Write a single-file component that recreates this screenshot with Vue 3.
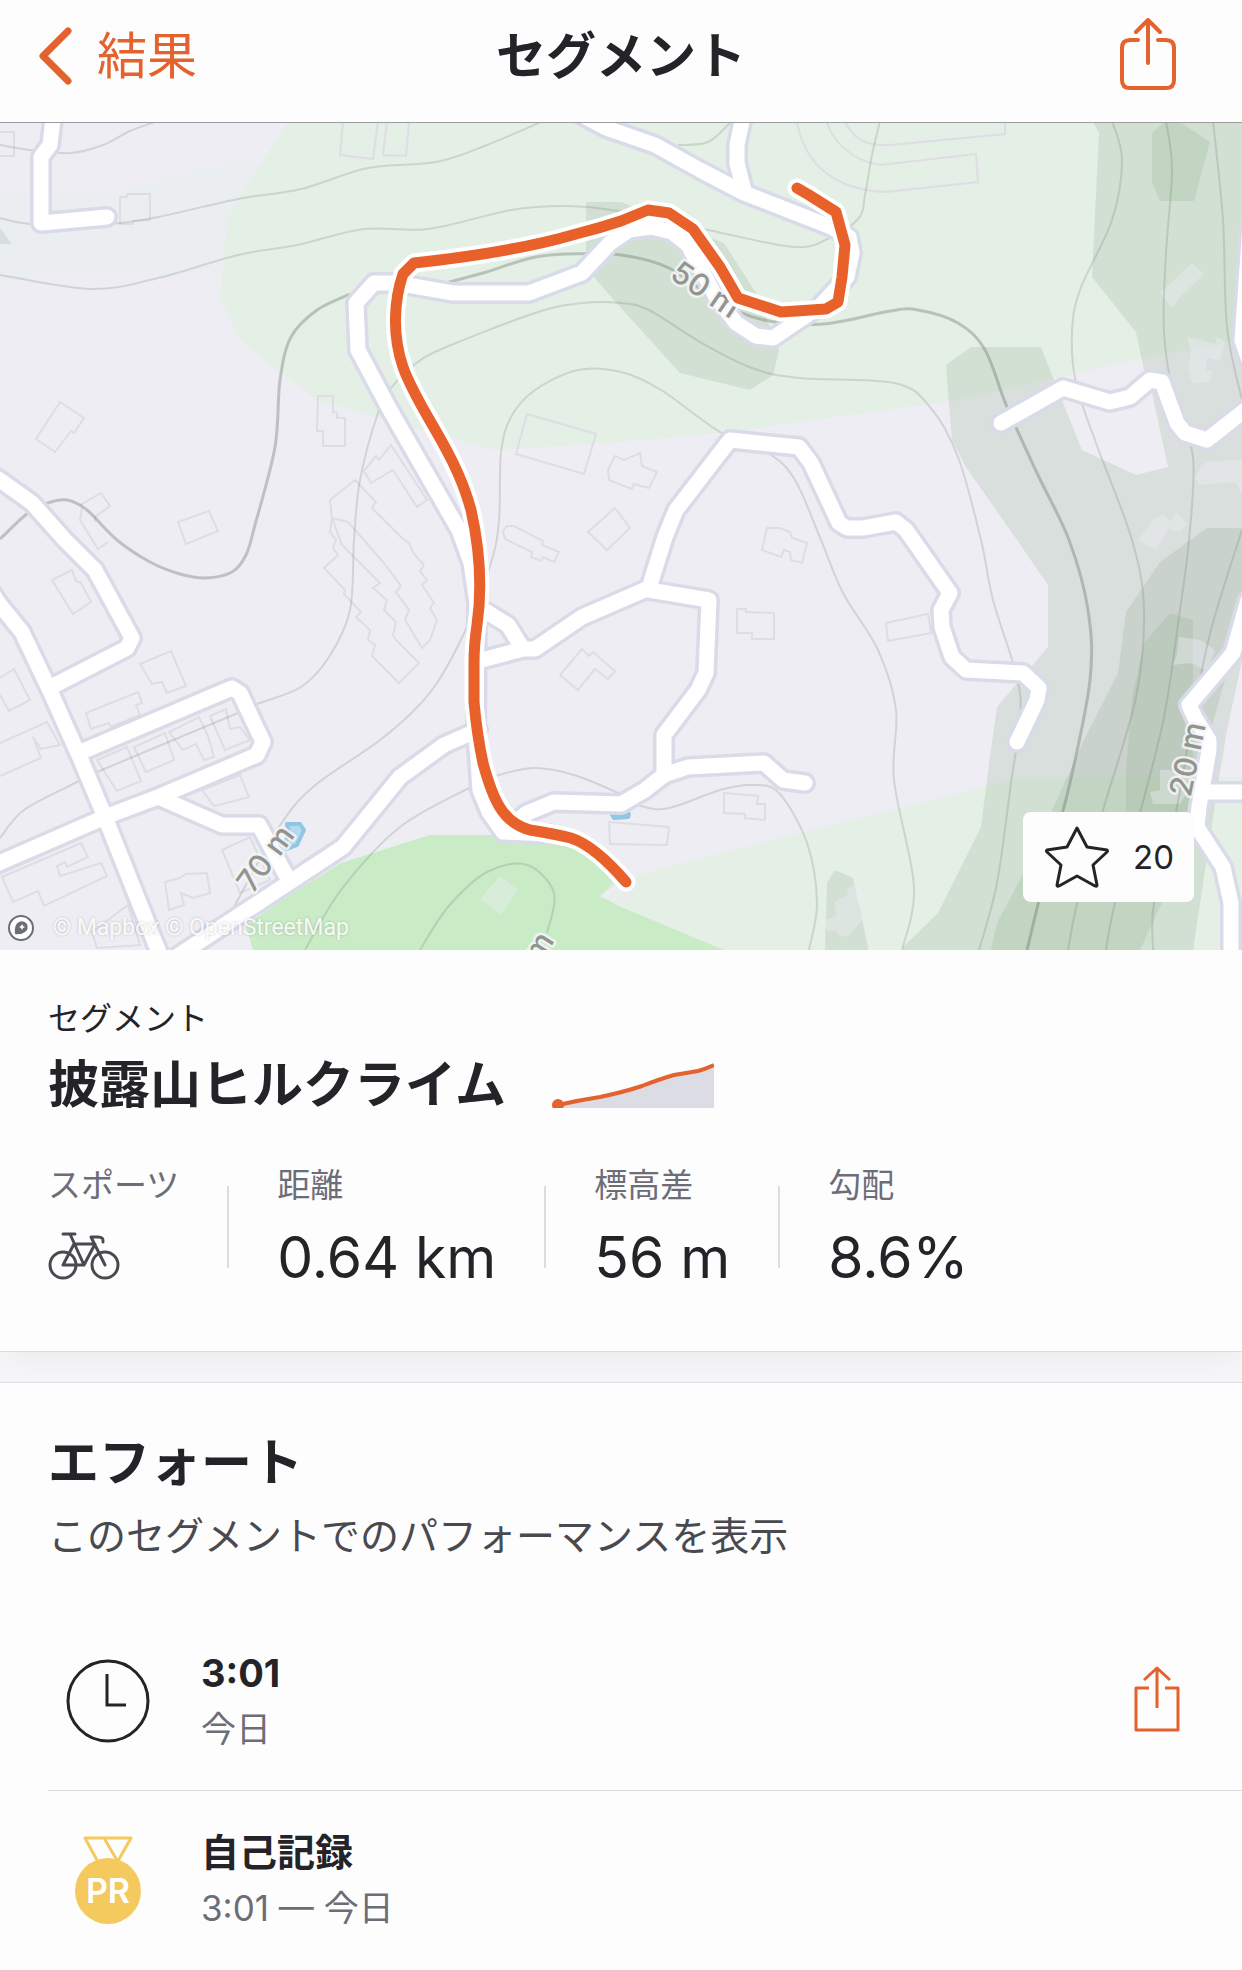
<script setup>
import { ref } from 'vue';

const starred = ref(false);
const starCount = ref(20);

const stats = [
    { label: 'スポーツ', icon: 'bike' },
    { label: '距離', value: '0.64 km' },
    { label: '標高差', value: '56 m' },
    { label: '勾配', value: '8.6%' },
];

const efforts = [
    { icon: 'clock', title: '3:01', detail: '今日', shareable: true },
    { icon: 'medal', title: '自己記録', detail: '3:01 — 今日', shareable: false },
];

const shades = [
    '586,202 621,202 692,230 724,243 756,293 779,350 773,375 750,390 680,373 621,308 586,268',
    '1093,122 1099,133 1092,277 1136,332 1144,370 1152,393 1168,467 1136,475 1082,450 1063,403 1041,347 971,347 946,365 952,440 966,467 1017,540 1048,585 1048,647 997,707 990,757 981,827 938,913 903,947 903,950 1193,950 1211,830 1215,803 1227,730 1242,660 1242,122',
    '1164,122 1152,133 1152,183 1160,201 1194,201 1210,142 1180,122',
    '1207,528 1160,562 1126,612 1118,673 1084,740 1049,817 1020,880 997,923 991,950 1140,950 1160,907 1187,863 1205,750 1242,620 1242,528',
    '1170,613 1193,620 1193,820 1126,813 1126,770 1132,697 1144,643',
    '835,870 853,878 868,947 868,950 825,950 827,883',
];

const contours = [
    [[0, 145], [30, 150], [71, 153], [103, 145], [130, 131], [158, 121]],
    [[0, 218], [30, 224], [107, 224], [158, 217], [238, 199], [301, 189], [368, 168], [436, 162], [487, 145], [543, 121]],
    [[0, 275], [91, 289], [158, 278], [238, 255], [297, 245], [364, 229], [428, 229], [511, 210], [566, 206], [618, 211], [708, 230], [795, 247], [831, 237], [859, 218], [865, 195], [872, 155], [880, 121]],
    [[0, 838], [24, 810], [75, 783], [97, 772], [238, 713], [257, 704], [301, 687], [329, 657], [350, 610], [354, 540], [360, 480], [378, 413], [392, 387], [414, 365], [444, 348], [535, 313], [582, 303], [621, 303], [649, 310], [700, 342], [752, 368], [799, 378], [894, 383], [930, 407], [958, 457], [981, 540], [993, 600], [1017, 677], [1020, 720], [1011, 783], [997, 883], [979, 950]],
    [[234, 907], [277, 830], [313, 787], [384, 737], [432, 690], [467, 627], [491, 563], [499, 520], [501, 453], [511, 417], [535, 390], [578, 370], [621, 372], [661, 390], [720, 432], [768, 453], [795, 480], [821, 540], [843, 593], [878, 650], [896, 710], [894, 780], [914, 887], [902, 950]],
    [[305, 950], [341, 890], [400, 827], [471, 787], [499, 775], [535, 768], [574, 775], [618, 793], [641, 806], [669, 808], [720, 790], [752, 785], [779, 793], [807, 843], [817, 903], [809, 950]],
    [[420, 950], [448, 907], [487, 872], [527, 865], [554, 893], [547, 933]],
    [[1112, 121], [1122, 160], [1112, 220], [1080, 290], [1072, 333], [1076, 383], [1096, 443], [1132, 540], [1144, 610], [1136, 697], [1104, 807], [1078, 900], [1068, 950]],
    [[1166, 121], [1172, 170], [1166, 253], [1164, 333], [1175, 403], [1193, 457], [1189, 540], [1179, 617], [1164, 717], [1140, 813], [1114, 907], [1106, 950]],
    [[1213, 121], [1223, 220], [1227, 327], [1242, 400]],
    [[1242, 530], [1211, 630], [1193, 717], [1175, 817], [1154, 903], [1153, 950]],
    [[678, 145], [708, 142], [732, 121]],
];

const mainContours = [
    [[0, 539], [28, 513], [48, 503], [67, 500], [87, 510], [117, 540], [150, 562], [180, 574], [206, 578], [232, 572], [246, 555], [255, 525], [275, 447], [280, 380], [291, 337], [317, 310], [350, 294]],
    [[449, 282], [483, 273], [531, 258], [566, 254], [621, 255], [669, 268], [720, 302], [764, 320], [823, 324], [890, 311], [918, 310], [958, 323], [985, 350], [1007, 407], [1037, 473], [1069, 540], [1088, 610], [1090, 680], [1069, 787], [1049, 860], [1027, 950]],
];

const buildings = [
    'M0 132H14V156H0',
    'M120 197H127V194H150V220L133 221V224H120Z',
    'M343 122L340 155L373 159L378 122',
    'M387 122L383 155L406 156L409 122',
    'M60 402L84 418L74 433L71 431L55 452L36 439Z',
    'M318 396H333V412L337 413V418H345V446H323V431H317Z',
    'M527 414L596 434L584 474L516 454Z',
    'M178 522L209 511L218 531L186 544Z',
    'M80 505L101 493L110 506L95 517V522M82 508L80 520L98 549L108 542',
    'M379 460L391 445L427 500L417 507L393 470L371 483L364 471L376 456Z',
    'M355 480L376 502L372 508L402 538L409 543L414 554L424 565L420 571L427 580L422 585L434 603L430 608L437 620L430 640L422 648L410 628L405 620L409 610L396 592L401 586L384 563L348 522L332 518L330 500Z',
    'M332 518L330 532L336 540L333 548L338 555L324 568L345 590L344 594L361 612L356 617L370 630L368 640L375 645L372 656L399 683L419 663L396 640L393 635L396 622L384 610L387 600L373 588L380 583L342 545Z',
    'M507 526L514 526L543 541L542 545L559 552L554 562L543 557L541 561L531 557L532 552L505 539L503 531Z',
    'M588 532L615 508L630 528L607 550Z',
    'M608 470L615 456L624 460L640 453L642 466L657 472L649 488L634 484L632 489L609 480Z',
    'M767 528L780 528L790 532L792 538L807 543L802 563L791 560L790 552L784 550L781 557L762 550Z',
    'M737 609H746V612L774 613V639H752V633H737Z',
    'M886 623L928 614L931 633L888 641Z',
    'M560 675L582 649L589 656L593 652L615 671L608 679L595 669L578 690Z',
    'M724 793L758 796L757 804H765V820L745 818V814L724 813Z',
    'M609 822L669 827L667 845L610 844Z',
    'M52 580L72 570L76 581L81 583L91 602L73 614Z',
    'M140 664L171 651L186 686L167 693L162 682L152 684Z',
    'M86 713L138 692L142 703L136 705L140 715L111 727L109 723L91 729Z',
    'M0 678L14 669L30 700L9 711L0 695M0 743L47 722L60 745L41 749L33 737L41 758L0 776',
    'M97 760L127 747L141 781L117 791Z M134 747L165 733L174 760L146 772Z',
    'M169 732L199 717L208 736L214 757L204 760L196 744L183 750Z M210 716L226 709L230 729L240 727L250 740L225 750Z',
    'M202 790L240 775L249 797L234 801L214 806Z',
    'M2 877L81 843L88 857L67 867L65 862L57 866L60 876L101 863L107 876L44 906L38 891L13 902Z',
    'M165 882L180 878L186 874L207 873L210 893L193 898L181 893L184 905L169 910Z',
    'M222 850L250 837L270 880L240 893Z',
    'M92 932L128 905L140 945L97 948Z',
    'M797 122C805 165 835 190 886 192L978 182L976 154L880 165C850 160 832 140 827 122M845 122C855 142 870 146 890 145L1005 134V122',
];

// These sit on shaded slopes, where they are drawn lighter than the ground.
const litBuildings = [
    '1160,293 1192,263 1204,274 1182,295 1178,300 1172,308',
    '1187,337 1205,341 1215,344 1217,336 1225,342 1220,361 1207,358 1206,370 1212,371 1210,382 1192,383 1188,368 1191,352',
    '1195,477 1201,467 1207,462 1242,459 1242,495 1235,482 1199,485',
    '1138,540 1155,518 1164,514 1170,522 1176,512 1187,524 1180,532 1168,529 1156,550',
    '1179,637 1200,640 1215,650 1207,671 1190,663 1173,665 1177,654',
    '1150,792 1160,790 1160,770 1180,770 1195,780 1180,804 1153,804',
    '834,902 848,895 847,889 858,884 866,902 858,907 862,920 850,935 840,937 835,930 828,932 822,921 836,916',
    '500,876 518,890 501,915 480,899',
    '600,896 615,880 635,885 624,908',
];

const roads = [
    '54,110 50,145 41,157 41,223 107,217',
    '580,114 606,128 655,145 700,170 744,193 831,227 849,237 852,253 847,277 819,307 773,338 756,336 736,323 716,297 688,245 672,232 651,227 629,230 610,243 582,273 529,293 453,293 396,283 374,283 356,303 358,350 390,410 459,530 471,563 477,603 476,733 480,790 489,812 503,832 550,834',
    '744,112 737,145 737,163 744,190',
    '-10,474 0,480 32,503 65,540 95,570 132,638 127,648 51,687',
    '-10,590 0,605 22,632 51,693 81,760 105,817 162,960',
    '81,752 232,688 240,693 263,742 257,755 158,797 105,817 -10,867',
    '158,797 222,825 259,825 287,877',
    '170,961 343,847 400,777 444,745 478,730',
    '487,612 508,625 523,649',
    '478,661 523,649 535,649 582,617 649,588 665,537 676,510 730,440 799,447 811,463 839,523 847,528 863,528 896,522 906,530 950,593 941,610 942,627 952,657 966,670 1023,673 1039,688 1037,700 1017,742',
    '649,590 709,600 706,673 698,690 664,735 664,775 645,790 621,804 554,802 527,813 510,826',
    '664,775 688,767 764,763 783,780 805,783',
    '1001,423 1063,388 1110,402 1130,397 1150,380 1162,382 1177,423 1185,433 1207,440 1254,403',
    '1250,225 1242,340 1254,375',
    '1248,600 1233,653 1189,705 1195,718 1209,740 1209,750 1199,807 1197,827 1223,867 1231,903 1231,960',
    '1203,792 1252,792',
];

const route = [
    'M797 188L809 195L836 212L845 245L842 277L838 302L826 309L781 312L738 298',
    'L720 267L693 229L669 213L648 210L621 221Q600 228 576 234Q515 252 414 263',
    'L403 274C394 300 392 335 403 367C418 410 455 450 471 510C480 550 482 590 477 625',
    'Q474 645 474 663V702Q477 735 483 763C493 800 503 823 530 830Q555 834 571 838Q595 846 626 882',
].join('');

function smooth(points) {
    let path = `M${points[0].join(' ')}`;

    for (let i = 0; i < points.length - 1; i++) {
        const before = points[i - 1] || points[i];
        const from = points[i];
        const to = points[i + 1];
        const after = points[i + 2] || to;

        const c1 = [from[0] + (to[0] - before[0]) / 6, from[1] + (to[1] - before[1]) / 6];
        const c2 = [to[0] - (after[0] - from[0]) / 6, to[1] - (after[1] - from[1]) / 6];

        path += `C${c1.join(' ')} ${c2.join(' ')} ${to.join(' ')}`;
    }

    return path;
}

function toggleStar() {
    starred.value = !starred.value;
    starCount.value += starred.value ? 1 : -1;
}
</script>

<template>
    <div class="page">
        <header class="navbar">
            <button type="button" class="back">
                <svg width="34" height="58" viewBox="0 0 34 58" aria-hidden="true">
                    <path d="M30 4L5 29L30 54" />
                </svg>
                <span>結果</span>
            </button>
            <h1 class="navbar-title">セグメント</h1>
            <button type="button" class="share" aria-label="共有">
                <svg width="56" height="72" viewBox="0 0 56 72" aria-hidden="true">
                    <path d="M18 22H10Q2 22 2 30V62Q2 70 10 70H46Q54 70 54 62V30Q54 22 46 22H38M28 2V45M16 14L28 2L40 14" />
                </svg>
            </button>
        </header>

        <div class="map">
            <svg class="map-canvas" viewBox="0 123 1242 827" role="img" aria-label="地図">
                <polygon class="haze" points="0,193 120,190 253,155 300,230 222,275 40,275 0,285" />
                <polygon class="park" points="287,122 253,177 228,217 220,297 238,338 277,370 317,400 376,417 440,435 495,450 621,442 720,433 958,400 1144,358 1242,340 1242,122" />
                <polygon class="park" points="602,898 637,875 1021,777 1242,777 1242,950 700,950" />
                <polygon class="wood" points="430,835 341,863 290,895 246,925 253,950 724,950 621,907 600,896 621,880 590,845 560,835" />
                <polygon v-for="(points, i) in shades" :key="i" class="shade" :points="points" />
                <polygon class="shade" points="0,228 12,244 0,244" />
                <path v-for="(d, i) in buildings" :key="i" class="building" :d="d" />
                <polygon v-for="(points, i) in litBuildings" :key="i" class="building-lit" :points="points" />
                <path v-for="(points, i) in contours" :key="i" class="contour" :d="smooth(points)" />
                <path v-for="(points, i) in mainContours" :key="i" class="contour main" :d="smooth(points)" />
                <path class="pool" d="M287 824L300 824L304 830L297 845L287 849L284 845L289 833ZM612 815L629 814L628 817L614 818Z" />
                <polyline v-for="(points, i) in roads" :key="i" class="road-casing" :points="points" />
                <polyline v-for="(points, i) in roads" :key="i" class="road" :points="points" />
                <g class="elevation">
                    <text transform="translate(706 289) rotate(34)">50 m</text>
                    <text transform="translate(265 858) rotate(-54)">70 m</text>
                    <text transform="translate(1187 759) rotate(-78)">20 m</text>
                    <text transform="translate(538 946) rotate(-58)">m</text>
                </g>
                <path class="route-casing" :d="route" />
                <path class="route" :d="route" />
            </svg>

            <div class="attribution">
                <svg width="28" height="28" viewBox="0 0 28 28" aria-hidden="true">
                    <circle cx="14" cy="14" r="12" fill="#fff" stroke="#6c6e76" stroke-width="2" />
                    <path d="M8 20Q7 10 12 8Q17 6 20 10Q22 15 18 18Q14 21 8 20Z" fill="#6c6e76" />
                    <path d="M15 10L16 12L18 13L16 14L15 16L14 14L12 13L14 12Z" fill="#fff" />
                </svg>
                <span><a href="#mapbox">© Mapbox</a> <a href="#osm">© OpenStreetMap</a></span>
            </div>

            <button type="button" class="star" :aria-pressed="starred" @click="toggleStar">
                <svg width="64" height="62" viewBox="0 0 64 62" aria-hidden="true">
                    <path d="M32 2L42 21L62 24Q63 25 62 26L48 39L52 59Q52 61 50 60L32 50L14 60Q12 61 12 59L16 39L2 26Q1 25 2 24L22 21Z" />
                </svg>
                <span>{{ starCount }}</span>
            </button>
        </div>

        <section class="summary">
            <p class="kind">セグメント</p>
            <div class="name-row">
                <h2>披露山ヒルクライム</h2>
                <svg class="profile" width="162" height="45" viewBox="0 0 162 45" aria-hidden="true">
                    <path d="M6 42L50 33L87 24Q108 15 122 11L148 7L162 1V45H6Z" fill="#dcdce5" />
                    <path d="M6 42Q28 37 48 34Q72 29 90 23Q108 16 122 12L146 8Q153 6 162 2" fill="none" stroke="#e4622d" stroke-width="4" />
                    <circle cx="6" cy="42" r="6" fill="#e4622d" />
                </svg>
            </div>
            <dl class="stats">
                <div v-for="stat in stats" :key="stat.label" class="stat">
                    <div>
                        <dt>{{ stat.label }}</dt>
                        <dd>
                            <svg v-if="stat.icon === 'bike'" class="bike" width="72" height="50" viewBox="0 0 72 50" role="img" aria-label="自転車">
                                <circle cx="15" cy="33" r="13" />
                                <circle cx="57" cy="33" r="13" />
                                <path d="M15 2H27M22 2L36 33H15L26 12H47L36 33M57 33L43 5H50Q56 5 55 10" />
                            </svg>
                            <template v-else>{{ stat.value }}</template>
                        </dd>
                    </div>
                </div>
            </dl>
        </section>

        <section class="efforts">
            <h2>エフォート</h2>
            <p class="lead">このセグメントでのパフォーマンスを表示</p>
            <ul>
                <li v-for="effort in efforts" :key="effort.title">
                    <svg v-if="effort.icon === 'clock'" class="effort-icon" width="84" height="88" viewBox="0 0 84 88" aria-hidden="true">
                        <circle cx="42" cy="44" r="40" fill="none" stroke="#242428" stroke-width="3" />
                        <path d="M41 17V48H60" fill="none" stroke="#242428" stroke-width="3" />
                    </svg>
                    <svg v-else class="effort-icon" width="84" height="88" viewBox="0 0 84 88" aria-hidden="true">
                        <path d="M32 26L19 2H65L52 25M38 2L52 26" fill="none" stroke="#f4ca5f" stroke-width="3" stroke-linejoin="round" />
                        <circle cx="42" cy="55" r="33" fill="#f4ca5f" />
                        <text x="42" y="67" class="medal-text">PR</text>
                    </svg>
                    <div class="effort-text">
                        <strong>{{ effort.title }}</strong>
                        <span>{{ effort.detail }}</span>
                    </div>
                    <button v-if="effort.shareable" type="button" class="share small" aria-label="エフォートを共有">
                        <svg width="46" height="66" viewBox="0 0 46 66" aria-hidden="true">
                            <path d="M15 22H2V64H44V22H31M23 2V42M10 14L23 2L36 14" />
                        </svg>
                    </button>
                </li>
            </ul>
        </section>
    </div>
</template>

<style>
body {
    margin: 0;
    background: #fdfdfd;
}
</style>

<style scoped>
.page {
    font-family: Inter, 'Noto Sans CJK JP', sans-serif;
    color: #242428;
    background: #f5f5f8;
}

h1,
h2,
p,
dl,
dd,
ul {
    margin: 0;
    padding: 0;
}

button {
    padding: 0;
    border: 0;
    background: none;
    font-family: inherit;
    color: inherit;
    cursor: pointer;
}

button svg,
.effort-icon {
    display: block;
    flex: none;
}

.navbar {
    display: grid;
    grid-template-columns: 1fr auto 1fr;
    align-items: center;
    height: 112px;
    padding: 0 38px 10px;
    border-bottom: 1px solid #9a9ca0;
    background: #fdfdfd;
}

.back {
    display: flex;
    align-items: center;
    gap: 25px;
    justify-self: start;
    font-size: 50px;
    line-height: 64px;
    color: #e4622d;
}

.back path {
    fill: none;
    stroke: #e4622d;
    stroke-width: 7;
    stroke-linecap: round;
    stroke-linejoin: round;
}

.navbar-title {
    font-size: 50px;
    line-height: 64px;
    font-weight: 700;
}

.share {
    justify-self: end;
    margin: 0 28px 4px 0;
}

.share path {
    fill: none;
    stroke: #e4622d;
    stroke-width: 4;
    stroke-linecap: round;
    stroke-linejoin: round;
}

.share.small {
    margin: 0 0 4px auto;
}

.share.small path {
    stroke-width: 3;
    stroke-linecap: butt;
}

.map {
    position: relative;
}

.map-canvas {
    display: block;
    width: 100%;
    height: auto;
    background: #eeedf4;
}

.haze {
    fill: #ebeef0;
}

.park {
    fill: #e4efe6;
}

.wood {
    fill: #c9ebc6;
}

.shade {
    fill: rgba(143, 172, 139, 0.21);
}

.building {
    fill: none;
    stroke: #dedde3;
    stroke-width: 2;
}

.building-lit {
    fill: rgba(238, 238, 244, 0.4);
}

.contour {
    fill: none;
    stroke: rgba(90, 100, 90, 0.19);
    stroke-width: 2;
}

.contour.main {
    stroke: rgba(90, 100, 90, 0.32);
    stroke-width: 3;
}

.pool {
    fill: #b4daee;
    stroke: #92c6e2;
    stroke-width: 4;
    stroke-linejoin: round;
}

.road,
.road-casing,
.route,
.route-casing {
    fill: none;
    stroke-linecap: round;
    stroke-linejoin: round;
}

.road-casing {
    stroke: #d9dbe8;
    stroke-width: 22;
}

.road {
    stroke: #fff;
    stroke-width: 15;
}

.route-casing {
    stroke: #fff;
    stroke-width: 19;
}

.route {
    stroke: #e8602a;
    stroke-width: 11;
}

.elevation text {
    font-size: 31px;
    font-weight: 500;
    text-anchor: middle;
    dominant-baseline: central;
    fill: #92958f;
    stroke: rgba(246, 246, 248, 0.85);
    stroke-width: 5;
    stroke-linejoin: round;
    paint-order: stroke;
}

.attribution {
    position: absolute;
    left: 7px;
    bottom: 7px;
    display: flex;
    align-items: center;
    gap: 18px;
    font-family: Roboto, sans-serif;
    font-size: 23px;
    line-height: 30px;
}

.attribution a {
    color: rgba(255, 255, 255, 0.9);
    text-decoration: none;
    text-shadow: 0 0 3px rgba(0, 0, 0, 0.2);
}

.star {
    position: absolute;
    right: 48px;
    bottom: 48px;
    display: flex;
    align-items: center;
    gap: 24px;
    height: 90px;
    padding: 0 20px 0 22px;
    border-radius: 8px;
    background: #fdfdfd;
    font-size: 33px;
}

.star path {
    fill: none;
    stroke: #242428;
    stroke-width: 3;
    stroke-linejoin: round;
}

.star[aria-pressed='true'] path {
    fill: #e4622d;
    stroke: #e4622d;
}

.summary {
    padding: 49px 48px 62px;
    border-bottom: 1px solid #dcdce2;
    background: #fdfdfd;
    box-shadow: 0 12px 24px -6px rgba(0, 0, 0, 0.04);
}

.kind {
    font-size: 32px;
    line-height: 40px;
}

.name-row {
    display: flex;
    align-items: center;
    gap: 46px;
    margin-top: 13px;
}

.name-row h2,
.efforts h2 {
    font-size: 51px;
    line-height: 66px;
    font-weight: 700;
}

.stats {
    display: flex;
    margin-top: 47px;
}

.stat {
    display: flex;
    align-items: center;
}

.stat:not(:last-child)::after {
    content: '';
    width: 2px;
    height: 82px;
    margin: 0 48px;
    background: #dcdce2;
}

.stat dt {
    font-size: 33px;
    line-height: 40px;
    color: #6d6d78;
}

.stat dd {
    display: flex;
    align-items: center;
    height: 64px;
    margin-top: 20px;
    font-size: 57px;
}

.bike {
    fill: none;
    stroke: #494950;
    stroke-width: 3;
    stroke-linecap: round;
    stroke-linejoin: round;
}

.efforts {
    position: relative;
    margin-top: 30px;
    padding-top: 47px;
    border-top: 1px solid #dcdce2;
    background: #fdfdfd;
}

.efforts h2,
.lead {
    padding: 0 48px;
}

.lead {
    margin-top: 16px;
    font-size: 39px;
    line-height: 48px;
    color: #494950;
}

.efforts ul {
    margin: 52px 0 0 48px;
    list-style: none;
}

.efforts li {
    display: flex;
    align-items: center;
    gap: 51px;
    height: 178px;
    padding: 0 62px 0 18px;
}

.efforts li + li {
    border-top: 1px solid #dcdce5;
}

.effort-text {
    display: flex;
    flex-direction: column;
    font-size: 35px;
    line-height: 56px;
}

.effort-text strong {
    font-size: 38px;
    font-weight: 700;
}

.effort-text span {
    color: #6d6d78;
}

.medal-text {
    font-size: 34px;
    font-weight: 600;
    fill: #fff;
    text-anchor: middle;
}
</style>
